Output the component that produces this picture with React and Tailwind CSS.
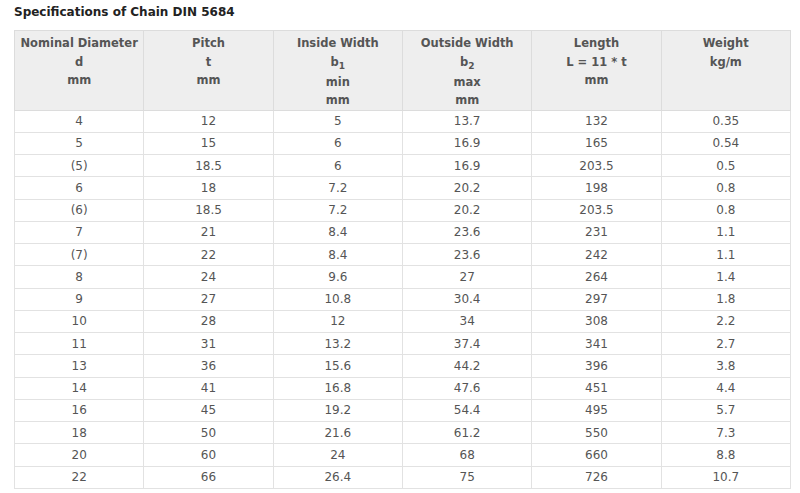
import React from "react";

const rows = [
  ["4", "12", "5", "13.7", "132", "0.35"],
  ["5", "15", "6", "16.9", "165", "0.54"],
  ["(5)", "18.5", "6", "16.9", "203.5", "0.5"],
  ["6", "18", "7.2", "20.2", "198", "0.8"],
  ["(6)", "18.5", "7.2", "20.2", "203.5", "0.8"],
  ["7", "21", "8.4", "23.6", "231", "1.1"],
  ["(7)", "22", "8.4", "23.6", "242", "1.1"],
  ["8", "24", "9.6", "27", "264", "1.4"],
  ["9", "27", "10.8", "30.4", "297", "1.8"],
  ["10", "28", "12", "34", "308", "2.2"],
  ["11", "31", "13.2", "37.4", "341", "2.7"],
  ["13", "36", "15.6", "44.2", "396", "3.8"],
  ["14", "41", "16.8", "47.6", "451", "4.4"],
  ["16", "45", "19.2", "54.4", "495", "5.7"],
  ["18", "50", "21.6", "61.2", "550", "7.3"],
  ["20", "60", "24", "68", "660", "8.8"],
  ["22", "66", "26.4", "75", "726", "10.7"],
];

// b with a subscript index, a bit taller than a plain header line
const Sub = ({ base, n }) => (
  <div className="h-[20px] overflow-hidden">
    {base}
    <span className="relative top-[3px] text-[9px] leading-none">{n}</span>
  </div>
);

const headers = [
  ["Nominal Diameter", "d", "mm"],
  ["Pitch", "t", "mm"],
  ["Inside Width", <Sub base="b" n="1" />, "min", "mm"],
  ["Outside Width", <Sub base="b" n="2" />, "max", "mm"],
  ["Length", "L = 11 * t", "mm"],
  ["Weight", "kg/m"],
];

export default function App() {
  return (
    <div className="w-[800px] h-[493px] bg-white overflow-hidden font-['DejaVu_Sans',sans-serif] text-[#555]">
      <h1 className="pl-[14px] pt-[4px] h-[30px] text-[12px] font-bold text-[#222] leading-[17px]">
        Specifications of Chain DIN 5684
      </h1>
      <table className="ml-[14px] w-[777px] border-collapse table-fixed text-[12px]">
        <thead>
          <tr className="bg-[#eeeeee]">
            {headers.map((h, i) => (
              <th
                key={i}
                className="h-[79px] align-top border border-[#dcdcdc] pt-[3px] pb-0 px-0 font-bold text-[11.5px] leading-[18.5px] text-center text-[#555]"
              >
                {h.map((line, j) =>
                  typeof line === "string" ? <div key={j}>{line}</div> : <React.Fragment key={j}>{line}</React.Fragment>
                )}
              </th>
            ))}
          </tr>
        </thead>
        <tbody>
          {rows.map((r, i) => (
            <tr key={i}>
              {r.map((c, j) => (
                <td key={j} className="h-[22.25px] p-0 border border-[#e2e2e2] text-center leading-[20px]">
                  {c}
                </td>
              ))}
            </tr>
          ))}
        </tbody>
      </table>
    </div>
  );
}
